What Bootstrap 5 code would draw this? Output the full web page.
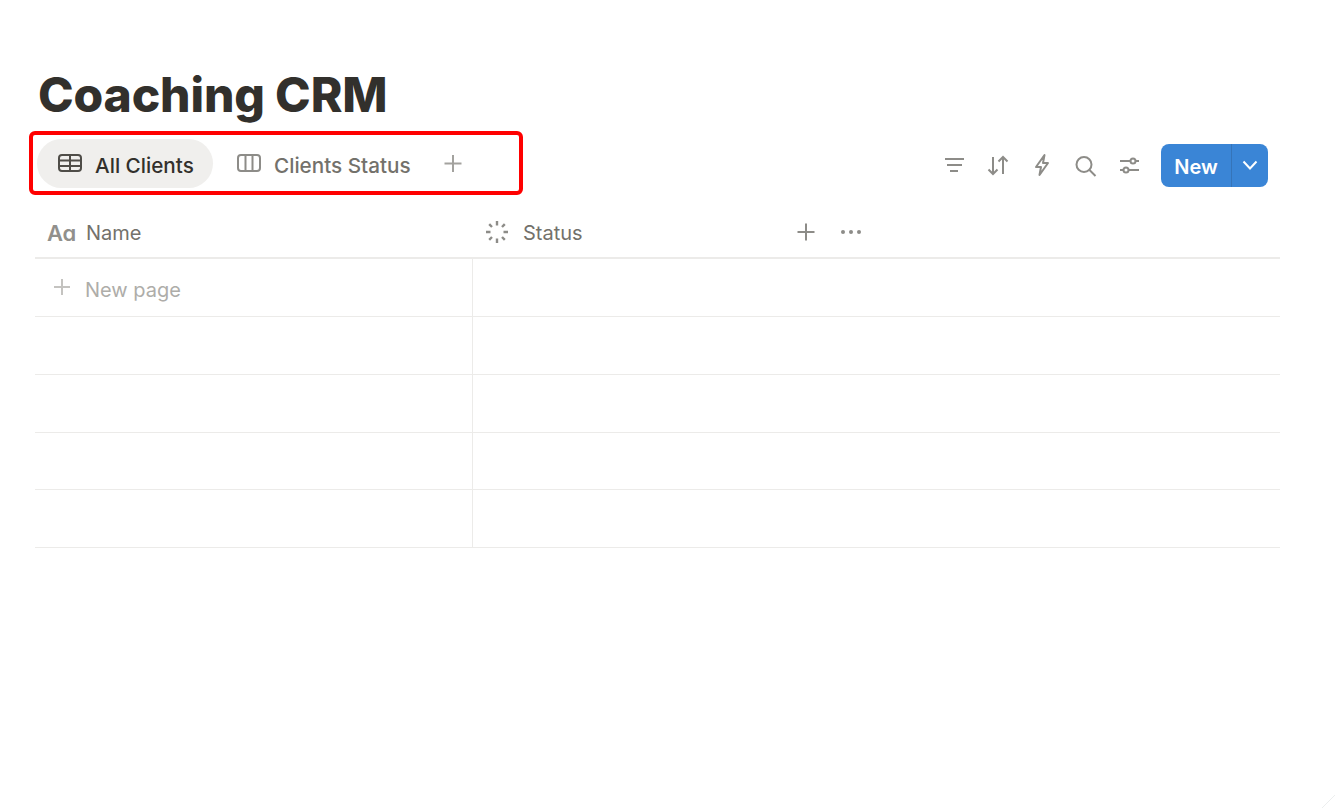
<!DOCTYPE html>
<html>
  <head>
    <title>Coaching CRM</title>
    <link
      rel="stylesheet"
      href="https://cdn.jsdelivr.net/npm/bootstrap@5.3.3/dist/css/bootstrap.min.css"
    />
    <script src="https://cdn.jsdelivr.net/npm/bootstrap@5.3.3/dist/js/bootstrap.bundle.min.js"></script>
    <style>
      body {
        font-family: Inter, "Liberation Sans", sans-serif;
        color: #37352f;
        background: #fff;
        overflow: hidden;
      }
      .page-wrap {
        padding: 64px 55px 0 35px;
      }
      .page-title {
        font-size: 48px;
        font-weight: 800;
        letter-spacing: -0.15px;
        line-height: 62px;
        margin: 0 0 6px 3px;
        color: #32302c;
      }
      .tool-row {
        height: 62px;
        margin-left: -6px;
        margin-right: 12px;
      }
      .tabs-box {
        width: 494px;
        height: 64px;
        border: 4px solid #f00;
        border-radius: 6px;
        padding: 4px 0 0 4px;
      }
      .view-tab {
        height: 49px;
        padding-top: 4px;
        border-radius: 25px;
        font-size: 20.7px;
        font-weight: 500;
        color: #73716b;
        gap: 12px;
      }
      .view-tab svg {
        width: 26px;
        height: 26px;
        margin-top: -3px;
      }
      .tab-active {
        width: 176px;
        padding-left: 20px;
        background: #f0efed;
        color: #32302c;
      }
      .tab-plain {
        padding-left: 23px;
      }
      .tab-add {
        margin-left: 29px;
      }
      .tool-side {
        margin-top: 4px;
      }
      .tool-icons {
        gap: 18px;
        margin-right: 18px;
      }
      .tool-icons svg {
        width: 26px;
        height: 26px;
        display: block;
      }
      .new-btn {
        width: 107px;
        height: 43px;
        background: #3a85d6;
        color: #fff;
        border-radius: 8px;
        font-size: 20px;
        font-weight: 600;
      }
      .new-main {
        width: 70px;
        padding-top: 3px;
      }
      .new-arrow {
        width: 37px;
        border-left: 1px solid #3574b9;
      }
      .crm-head {
        height: 53.3px;
        margin-top: 12px;
        padding-top: 3px;
        border-bottom: 2px solid #ecebe9;
        font-size: 20px;
        color: #73716b;
      }
      .crm-row {
        height: 57.75px;
        border-bottom: 1px solid #ecebe9;
      }
      .cell-name {
        width: 438px;
        flex: none;
        gap: 11px;
        padding-left: 12px;
      }
      .crm-row .cell-name {
        border-right: 1px solid #ecebe9;
      }
      .cell-status {
        width: 320px;
        padding-left: 11px;
        gap: 13px;
      }
      .cell-status svg {
        margin-top: -2px;
      }
      .cell-tail {
        gap: 19px;
        margin-top: -3px;
      }
      .aa-mark {
        font-size: 22px;
        font-weight: 600;
        letter-spacing: -0.5px;
        color: #91908c;
        width: 28px;
      }
      .new-page {
        font-size: 20px;
        color: #aeada9;
        gap: 11px;
        padding: 4px 0 0 3px;
      }
      .new-page svg {
        margin-top: -6px;
      }
      .corner-mark {
        position: absolute;
        right: 0;
        bottom: 0;
      }
    </style>
  </head>

  <body>
    <main class="page-wrap">
      <h1 class="page-title">Coaching CRM</h1>

      <div class="tool-row d-flex justify-content-between align-items-center">
        <div class="tabs-box d-flex">
          <div class="view-tab tab-active d-flex align-items-center">
            <svg viewBox="0 0 26 26" fill="none" stroke="#4f4d48" stroke-width="2">
              <rect x="2" y="4" width="22" height="16" rx="3" />
              <path d="M2 9.500h22M2 15h22M13 4v16" />
            </svg>
            <span>All Clients</span>
          </div>
          <div class="view-tab tab-plain d-flex align-items-center">
            <svg viewBox="0 0 26 26" fill="none" stroke="#8d8c88" stroke-width="2">
              <rect x="2" y="4" width="22" height="16" rx="3" />
              <path d="M9.500 4v16M16.500 4v16" />
            </svg>
            <span>Clients Status</span>
          </div>
          <div class="view-tab tab-add d-flex align-items-center">
            <svg viewBox="0 0 26 26" fill="none" stroke="#a3a29e" stroke-width="2">
              <path d="M13 4v17M4.500 12.500h17" />
            </svg>
          </div>
        </div>

        <div class="tool-side d-flex align-items-center">
          <div class="tool-icons d-flex align-items-center">
            <svg viewBox="0 0 26 26" fill="none" stroke="#8d8c88" stroke-width="2.200">
              <path d="M4 7h19M6 13h15M9 19h8" />
            </svg>
            <svg viewBox="0 0 26 26" fill="none" stroke="#8d8c88" stroke-width="2">
              <path d="M8 5v17M3.500 17.500 8 22l4.500-4.500M18 22V5M13.500 9.500 18 5l4.500 4.500" />
            </svg>
            <svg viewBox="0 0 26 26" fill="none" stroke="#8d8c88" stroke-width="2" stroke-linejoin="round">
              <path d="M15.500 3 7 15h5l-1.500 8L19 11h-5z" />
            </svg>
            <svg viewBox="0 0 26 26" fill="none" stroke="#8d8c88" stroke-width="2">
              <circle cx="11" cy="12.500" r="7.500" />
              <path d="m16.500 18 6 6" />
            </svg>
            <svg viewBox="0 0 26 26" fill="none" stroke="#8d8c88" stroke-width="2">
              <path d="M3 9h10.500M18.500 9H22M3 18h3.500M11.500 18H22" />
              <circle cx="16" cy="9" r="2.500" />
              <circle cx="9" cy="18" r="2.500" />
            </svg>
          </div>
          <div class="new-btn d-flex">
            <div class="new-main d-flex align-items-center justify-content-center">New</div>
            <div class="new-arrow d-flex align-items-center justify-content-center">
              <svg width="18" height="18" viewBox="0 0 18 18" fill="none" stroke="#fff" stroke-width="2">
                <path d="m2.500 5.500 6.500 7 6.500-7" />
              </svg>
            </div>
          </div>
        </div>
      </div>

      <div class="crm-head d-flex align-items-center">
        <div class="cell-name d-flex align-items-center">
          <span class="aa-mark">Aɑ</span>
          <span>Name</span>
        </div>
        <div class="cell-status d-flex align-items-center">
          <svg width="26" height="26" viewBox="0 0 26 26" fill="none" stroke="#8d8c88" stroke-width="2.400">
            <path d="M13 2v4.500M13 19.500V24M2 13h4.500M19.500 13H24M5.200 5.200l2.800 2.800M18 18l2.800 2.800M5.200 20.800 8 18M18 8l2.800-2.800" />
          </svg>
          <span>Status</span>
        </div>
        <div class="cell-tail d-flex align-items-center">
          <svg width="26" height="26" viewBox="0 0 26 26" fill="none" stroke="#8d8c88" stroke-width="2">
            <path d="M13 4.500v17M4.500 13h17" />
          </svg>
          <svg width="26" height="26" viewBox="0 0 26 26" fill="#8d8c88">
            <circle cx="5" cy="13" r="2" />
            <circle cx="13" cy="13" r="2" />
            <circle cx="21" cy="13" r="2" />
          </svg>
        </div>
      </div>

      <div id="rows"></div>
    </main>

    <svg class="corner-mark" width="14" height="14" viewBox="0 0 14 14" fill="none" stroke="#eceeee" stroke-width="1">
      <path d="M1 14 14 1" />
    </svg>

    <script>
      const rows = document.querySelector("#rows");
      for (let i = 0; i < 5; i++) {
        const row = document.createElement("div");
        row.className = "crm-row d-flex";
        const cell = document.createElement("div");
        cell.className = "cell-name d-flex align-items-center";
        if (i === 0) {
          cell.innerHTML = `<div class="new-page d-flex align-items-center">
            <svg width="24" height="24" viewBox="0 0 24 24" fill="none" stroke="#c4c3c0" stroke-width="2"><path d="M12 4v16M4 12h16" /></svg>
            <span>New page</span></div>`;
        }
        row.appendChild(cell);
        rows.appendChild(row);
      }
    </script>
  </body>
</html>
